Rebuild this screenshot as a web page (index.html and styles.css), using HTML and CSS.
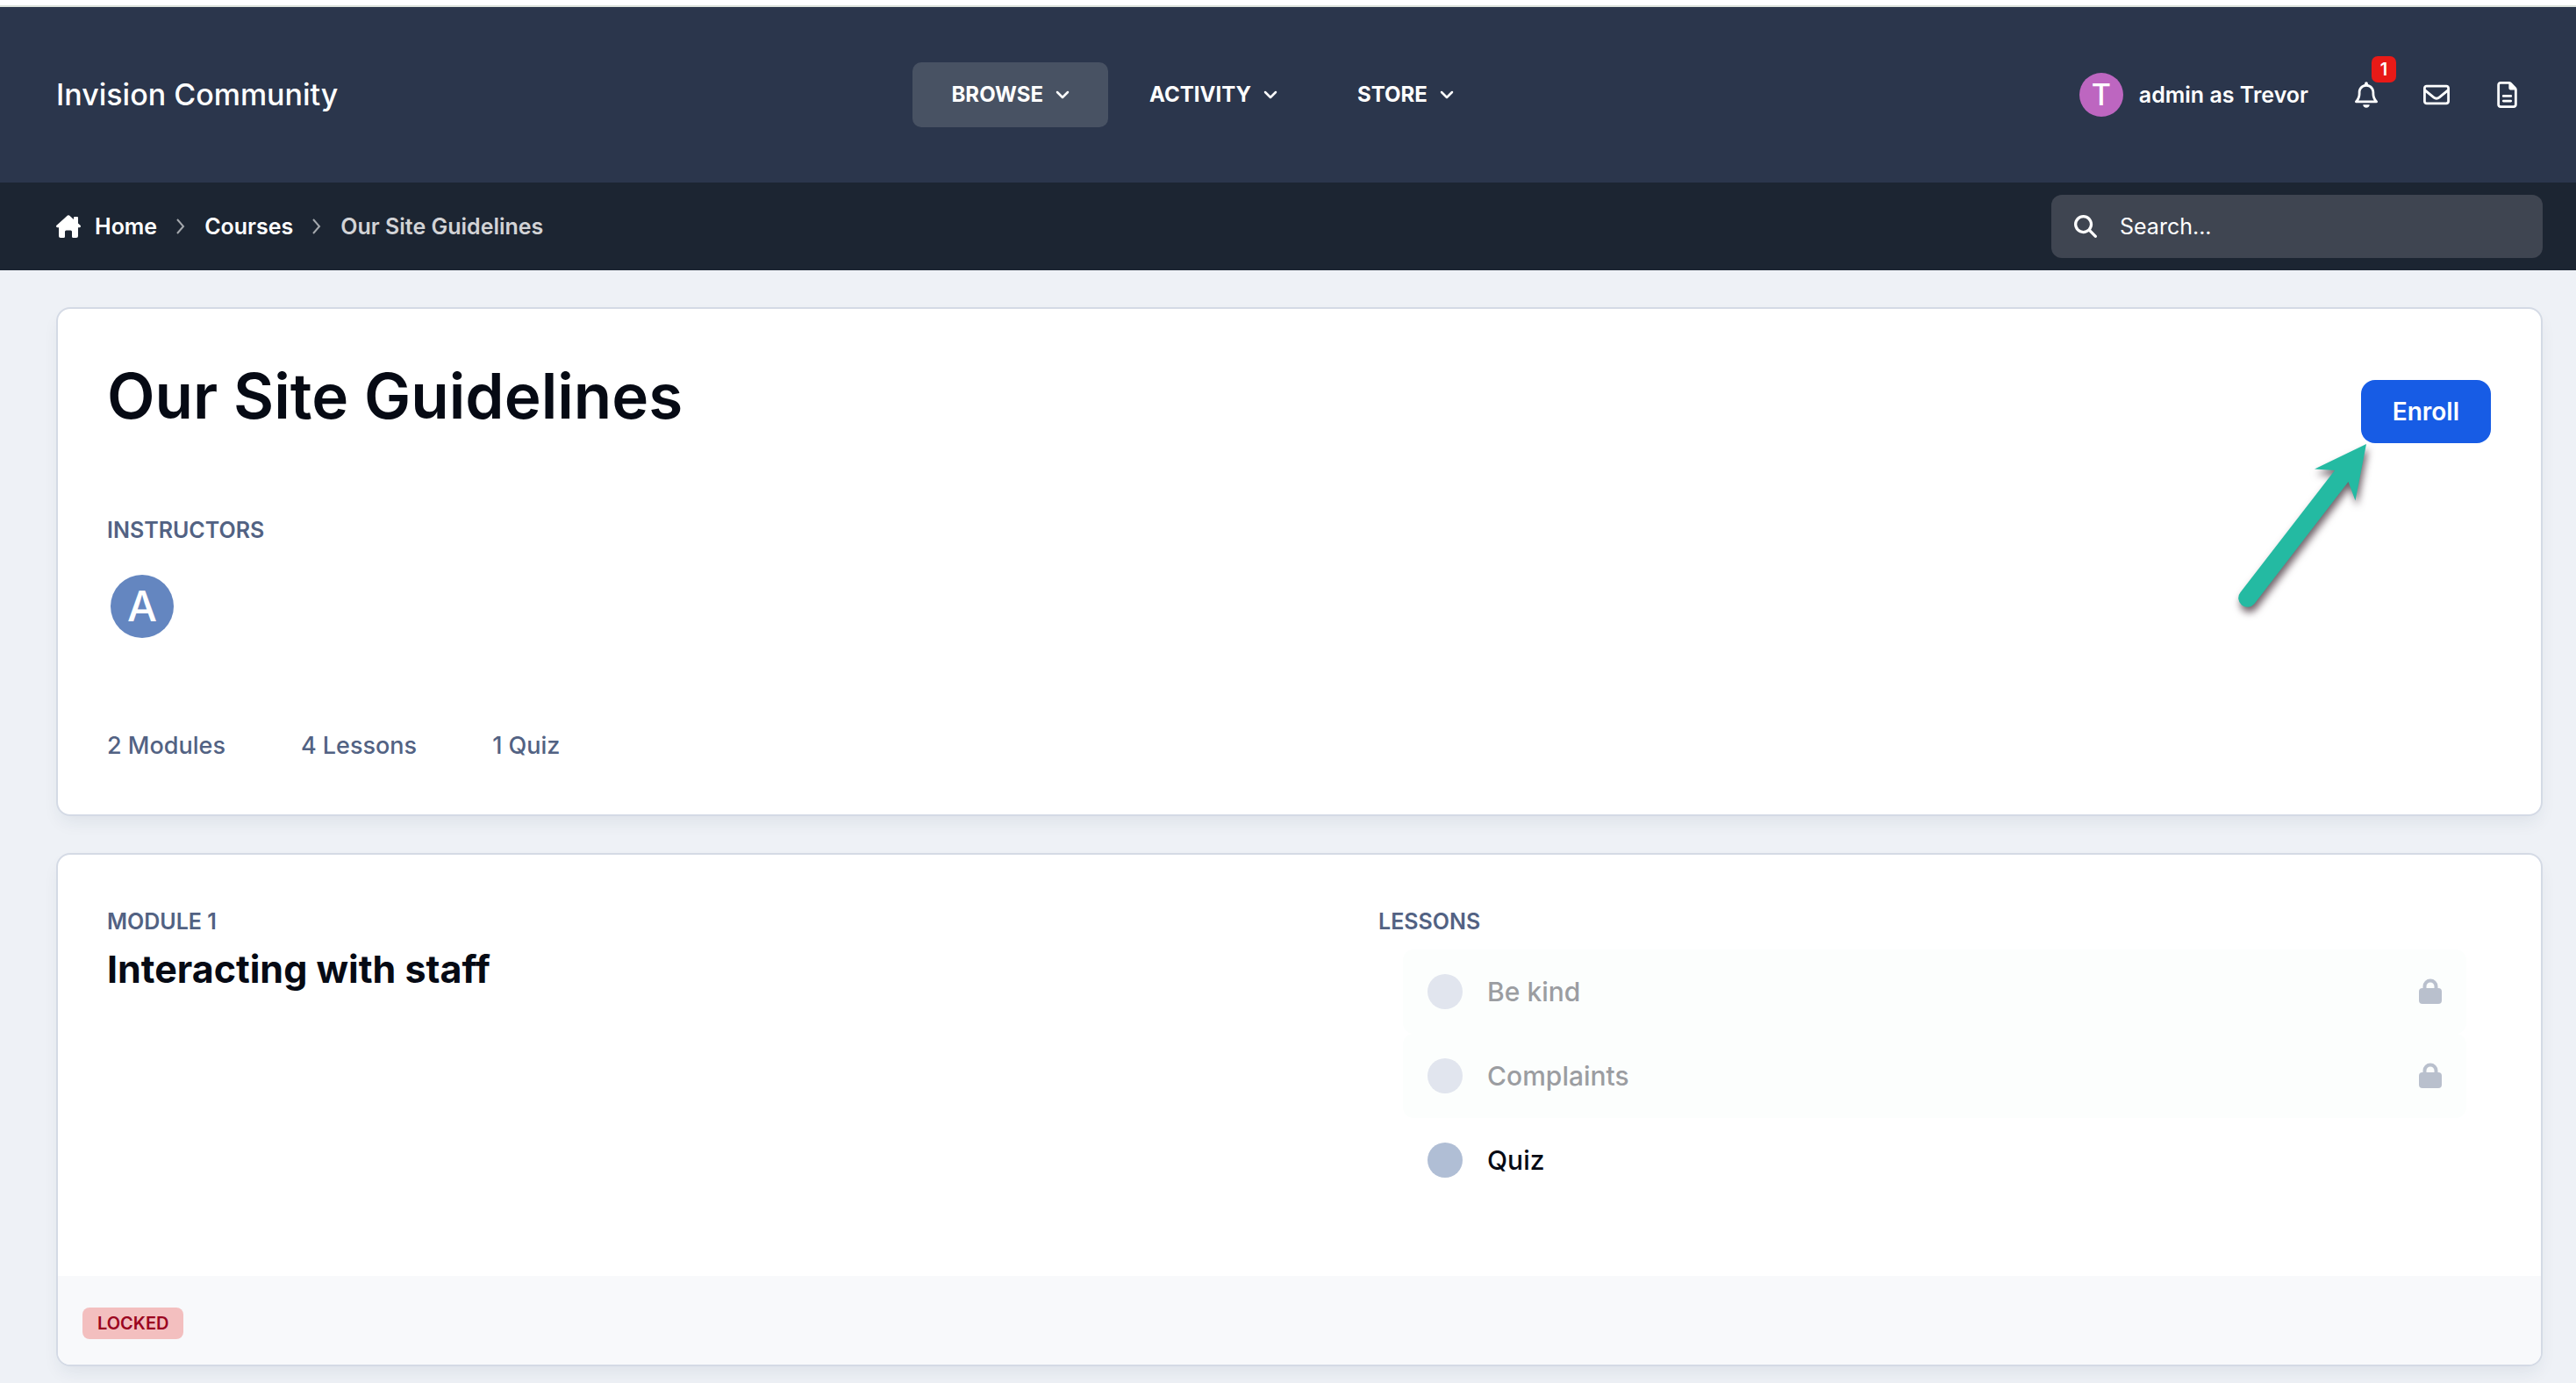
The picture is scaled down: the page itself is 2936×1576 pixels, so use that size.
FILE: index.html
```html
<!DOCTYPE html>
<html lang="en">
<head>
    <meta charset="UTF-8">
    <title>Our Site Guidelines - Invision Community</title>
    <link rel="stylesheet" href="styles.css">
</head>

<body>
    <header class="header">
        <a class="logo" href="#">Invision Community</a>

        <nav class="nav">
            <button class="nav-item active" type="button">BROWSE
                <svg class="chevron" viewBox="0 0 16 10"><path d="M2 2l6 6 6-6"/></svg>
            </button>
            <button class="nav-item" type="button">ACTIVITY
                <svg class="chevron" viewBox="0 0 16 10"><path d="M2 2l6 6 6-6"/></svg>
            </button>
            <button class="nav-item" type="button">STORE
                <svg class="chevron" viewBox="0 0 16 10"><path d="M2 2l6 6 6-6"/></svg>
            </button>
        </nav>

        <div class="user-nav">
            <button class="user" type="button">
                <span class="avatar">T</span>
                admin as Trevor
            </button>
            <button class="icon-button" type="button" aria-label="Notifications">
                <svg width="26" height="30" viewBox="0 0 448 512" fill="currentColor"><path d="M224 0c-17.700 0-32 14.300-32 32V51.200C119 66 64 130.600 64 208v25.400c0 45.400-15.500 89.500-43.800 124.900L5.300 377c-5.800 7.200-6.900 17.100-2.900 25.400S14.800 416 24 416H424c9.200 0 17.600-5.300 21.600-13.600s2.900-18.200-2.900-25.400l-14.900-18.600C399.500 322.900 384 278.800 384 233.400V208c0-77.400-55-142-128-156.800V32c0-17.700-14.300-32-32-32zm0 96c61.900 0 112 50.100 112 112v25.400c0 47.900 13.900 94.600 39.700 134.600H72.300C98.100 328 112 281.300 112 233.400V208c0-61.900 50.100-112 112-112zm64 352H224 160c0 17 6.700 33.300 18.700 45.300s28.300 18.700 45.300 18.700s33.300-6.700 45.300-18.700s18.700-28.300 18.700-45.300z"/></svg>
                <span class="count">1</span>
            </button>
            <button class="icon-button" type="button" aria-label="Messages">
                <svg width="30" height="30" viewBox="0 0 512 512" fill="currentColor"><path d="M64 112c-8.800 0-16 7.200-16 16v22.100L220.500 291.700c20.700 17 50.400 17 71.100 0L464 150.100V128c0-8.800-7.200-16-16-16H64zM48 212.200V384c0 8.800 7.200 16 16 16H448c8.800 0 16-7.200 16-16V212.200L322 328.800c-38.400 31.500-93.700 31.500-132 0L48 212.200zM0 128C0 92.700 28.700 64 64 64H448c35.300 0 64 28.700 64 64V384c0 35.300-28.700 64-64 64H64c-35.300 0-64-28.700-64-64V128z"/></svg>
            </button>
            <button class="icon-button" type="button" aria-label="Reports">
                <svg width="23" height="30" viewBox="0 0 384 512" fill="currentColor"><path d="M64 464c-8.800 0-16-7.200-16-16V64c0-8.800 7.200-16 16-16H224v80c0 17.700 14.300 32 32 32h80V448c0 8.800-7.200 16-16 16H64zM64 0C28.700 0 0 28.700 0 64V448c0 35.300 28.700 64 64 64H320c35.300 0 64-28.700 64-64V154.500c0-17-6.700-33.300-18.700-45.300L274.700 18.700C262.700 6.700 246.500 0 229.500 0H64zm56 256c-13.300 0-24 10.700-24 24s10.700 24 24 24H264c13.300 0 24-10.700 24-24s-10.700-24-24-24H120zm0 96c-13.300 0-24 10.700-24 24s10.700 24 24 24H264c13.300 0 24-10.700 24-24s-10.700-24-24-24H120z"/></svg>
            </button>
        </div>
    </header>

    <div class="subbar">
        <nav class="breadcrumb" aria-label="Breadcrumb">
            <a class="home" href="#">
                <svg width="28" height="26" viewBox="0 0 28 26" fill="currentColor"><path d="M13 .6a1.500 1.500 0 0 1 2 0l5 4.400V3q0-1 1-1h3q1 0 1 1v6.600l2.500 2.200q.9.900.3 1.700-.4.700-1.300.7H25V24q0 2-2 2h-3.500q-1.500 0-1.500-1.500V19q0-1.500-1.500-1.500h-5Q10 17.500 10 19v5.500Q10 26 8.500 26H5q-2 0-2-2v-9.800H1.500Q.6 14.200.2 13.500q-.5-.8.300-1.700z"/></svg>
                Home
            </a>
            <svg class="sep" viewBox="0 0 12 18"><path d="M2 1l7 8-7 8"/></svg>
            <a href="#">Courses</a>
            <svg class="sep" viewBox="0 0 12 18"><path d="M2 1l7 8-7 8"/></svg>
            <span class="current">Our Site Guidelines</span>
        </nav>
        <label class="search">
            <svg width="26" height="26" viewBox="0 0 512 512" fill="currentColor"><path d="M416 208c0 45.900-14.900 88.300-40 122.700L502.600 457.400c12.500 12.500 12.500 32.800 0 45.300s-32.800 12.500-45.300 0L330.700 376c-34.400 25.200-76.800 40-122.700 40C93.100 416 0 322.900 0 208S93.100 0 208 0S416 93.100 416 208zM208 352a144 144 0 1 0 0-288 144 144 0 1 0 0 288z"/></svg>
            <input type="search" placeholder="Search..." aria-label="Search">
        </label>
    </div>

    <main class="main">
        <section class="card course">
            <div class="course-top">
                <h1>Our Site Guidelines</h1>
                <div class="enroll">
                    <button class="enroll-button" type="button">Enroll</button>
                    <svg class="arrow" viewBox="0 0 170 210"><path d="M158 6L99 34.500l23 1.500L14.500 175A10 10 0 0 0 30.500 188L137.500 49l8 21.500z"/></svg>
                </div>
            </div>
            <h2 class="label">INSTRUCTORS</h2>
            <a class="avatar large" href="#">A</a>
            <ul class="stats">
                <li>2 Modules</li>
                <li>4 Lessons</li>
                <li>1 Quiz</li>
            </ul>
        </section>

        <section class="card">
            <div class="module">
                <div>
                    <div class="label">MODULE 1</div>
                    <h2 class="module-title">Interacting with staff</h2>
                </div>
                <div>
                    <h3 class="label">LESSONS</h3>
                    <ul class="lessons">
                        <li class="lesson locked">
                            <span class="dot"></span>
                            <span class="name">Be kind</span>
                            <svg class="lock" viewBox="0 0 26 30"><path d="M6.500 12V9a6.500 6.500 0 0 1 13 0v3"/><rect x="0" y="11" width="26" height="18" rx="4"/></svg>
                        </li>
                        <li class="lesson locked">
                            <span class="dot"></span>
                            <span class="name">Complaints</span>
                            <svg class="lock" viewBox="0 0 26 30"><path d="M6.500 12V9a6.500 6.500 0 0 1 13 0v3"/><rect x="0" y="11" width="26" height="18" rx="4"/></svg>
                        </li>
                        <li class="lesson">
                            <span class="dot"></span>
                            <span class="name">Quiz</span>
                        </li>
                    </ul>
                </div>
            </div>
            <div class="card-footer">
                <span class="badge">LOCKED</span>
            </div>
        </section>
    </main>
</body>
</html>
```
FILE: styles.css
```css
* {
    box-sizing: border-box;
}
body {
    margin: 0;
    border-top: 6px solid #fff;
    background: #eef1f6;
    color: #060a14;
    font-family: Inter, "Liberation Sans", sans-serif;
    font-size: 25px;
    line-height: 36px;
}
h1, h2, h3, ul {
    margin: 0;
    padding: 0;
}
ul {
    list-style: none;
}
a {
    color: inherit;
    text-decoration: none;
}
button {
    border: 0;
    padding: 0;
    background: none;
    color: inherit;
    font: inherit;
    font-weight: 600;
    cursor: pointer;
}
svg {
    display: block;
    flex: none;
}

/* header */
.header {
    display: flex;
    align-items: center;
    justify-content: space-between;
    height: 202px;
    padding: 0 39px 0 64px;
    border-top: 2px solid #dde3dc;
    background: #2b364c;
    color: #fff;
}
.logo {
    font-size: 34px;
    font-weight: 500;
}
.nav, .user-nav {
    display: flex;
    align-items: center;
}
.nav {
    gap: 3px;
}
.nav-item {
    display: flex;
    align-items: center;
    gap: 14px;
    height: 74px;
    padding: 0 44px;
    border-radius: 10px;
    font-size: 24px;
    font-weight: 700;
}
.nav-item.active {
    background: #485263;
}
.chevron {
    width: 16px;
    height: 10px;
    fill: none;
    stroke: #fff;
    stroke-width: 2.5;
    stroke-linecap: round;
    stroke-linejoin: round;
}
.user {
    display: flex;
    align-items: center;
    gap: 18px;
    padding: 0 26px 0 14px;
}
.avatar {
    display: flex;
    align-items: center;
    justify-content: center;
    width: 50px;
    height: 50px;
    border-radius: 50%;
    background: #bd66c0;
    color: #fff;
    font-size: 34px;
    font-weight: 500;
}
.avatar.large {
    width: 72px;
    height: 72px;
    background: #6486c0;
    font-size: 48px;
}
.icon-button {
    position: relative;
    display: flex;
    align-items: center;
    justify-content: center;
    width: 80px;
    height: 60px;
}
.count {
    position: absolute;
    top: -14px;
    right: 6px;
    width: 28px;
    border-radius: 7px;
    background: #e81a17;
    font-size: 20px;
    line-height: 30px;
}

/* breadcrumb and search */
.subbar {
    display: flex;
    align-items: center;
    justify-content: space-between;
    height: 100px;
    padding: 0 38px 0 64px;
    background: #1c2532;
    color: #fff;
}
.breadcrumb {
    display: flex;
    align-items: center;
    gap: 21px;
    font-weight: 600;
}
.home {
    display: flex;
    align-items: center;
    gap: 16px;
}
.sep {
    width: 12px;
    height: 18px;
    fill: none;
    stroke: #a4a8ad;
    stroke-width: 2;
}
.current {
    color: #d2d3d6;
}
.search {
    display: flex;
    align-items: center;
    gap: 26px;
    width: 560px;
    height: 72px;
    padding: 0 26px;
    border-radius: 12px;
    background: #3f4551;
}
.search input {
    flex: 1;
    min-width: 0;
    padding: 0;
    border: 0;
    outline: 0;
    background: none;
    color: #fff;
    font: inherit;
}
.search input::placeholder {
    color: #fff;
    opacity: 1;
}

/* cards */
.main {
    display: grid;
    gap: 42px;
    padding: 42px 38px 19px 64px;
}
.card {
    border: 2px solid #d4dae5;
    border-radius: 16px;
    background: #fff;
    box-shadow: 0 10px 20px -4px rgba(30, 50, 80, .08);
}
.course {
    padding: 56px 57px 58px 56px;
}
.course-top {
    display: flex;
    justify-content: space-between;
    margin-bottom: 81px;
}
h1 {
    font-size: 71px;
    font-weight: 600;
    line-height: 86px;
}
.enroll {
    position: relative;
    padding-top: 25px;
}
.enroll-button {
    height: 72px;
    padding: 0 36px;
    border-radius: 16px;
    background: #175ce5;
    color: #fff;
    font-size: 28px;
}
.arrow {
    position: absolute;
    top: 92px;
    right: 130px;
    width: 170px;
    height: 210px;
    fill: #24baa2;
    filter: drop-shadow(2px 6px 4px rgba(50, 30, 40, .7));
}
.label {
    color: #526283;
    font-size: 25px;
    font-weight: 600;
    line-height: 36px;
}
.course .avatar {
    margin: 33px 4px 103px;
}
.stats {
    display: flex;
    gap: 86px;
    color: #526283;
    font-size: 27px;
    font-weight: 500;
    line-height: 40px;
}
.module {
    display: grid;
    grid-template-columns: 8fr 7fr;
    padding: 58px 57px 84px 56px;
}
.module-title {
    margin-top: 14px;
    font-size: 43px;
    font-weight: 700;
    line-height: 44px;
}
.lessons {
    margin: 14px 28px 0;
}
.lesson {
    display: flex;
    align-items: center;
    gap: 28px;
    height: 96px;
    padding: 0 28px;
    border-radius: 12px;
    font-size: 30px;
    font-weight: 500;
}
.name {
    flex: 1;
}
.dot {
    width: 40px;
    height: 40px;
    border-radius: 50%;
    background: #b0bed5;
}
.locked {
    background: #fcfefd;
    color: #9b9da1;
}
.locked .dot {
    background: #e1e5ee;
}
.lock {
    width: 26px;
    height: 30px;
    fill: #b9c0cd;
}
.lock path {
    fill: none;
    stroke: #b9c0cd;
    stroke-width: 4;
}
.card-footer {
    display: flex;
    padding: 36px 28px 29px;
    border-radius: 0 0 14px 14px;
    background: #f8f9fb;
}
.badge {
    padding: 0 17px;
    border-radius: 8px;
    background: #f3bfbf;
    color: #9b0520;
    font-size: 20px;
    font-weight: 600;
}
```
